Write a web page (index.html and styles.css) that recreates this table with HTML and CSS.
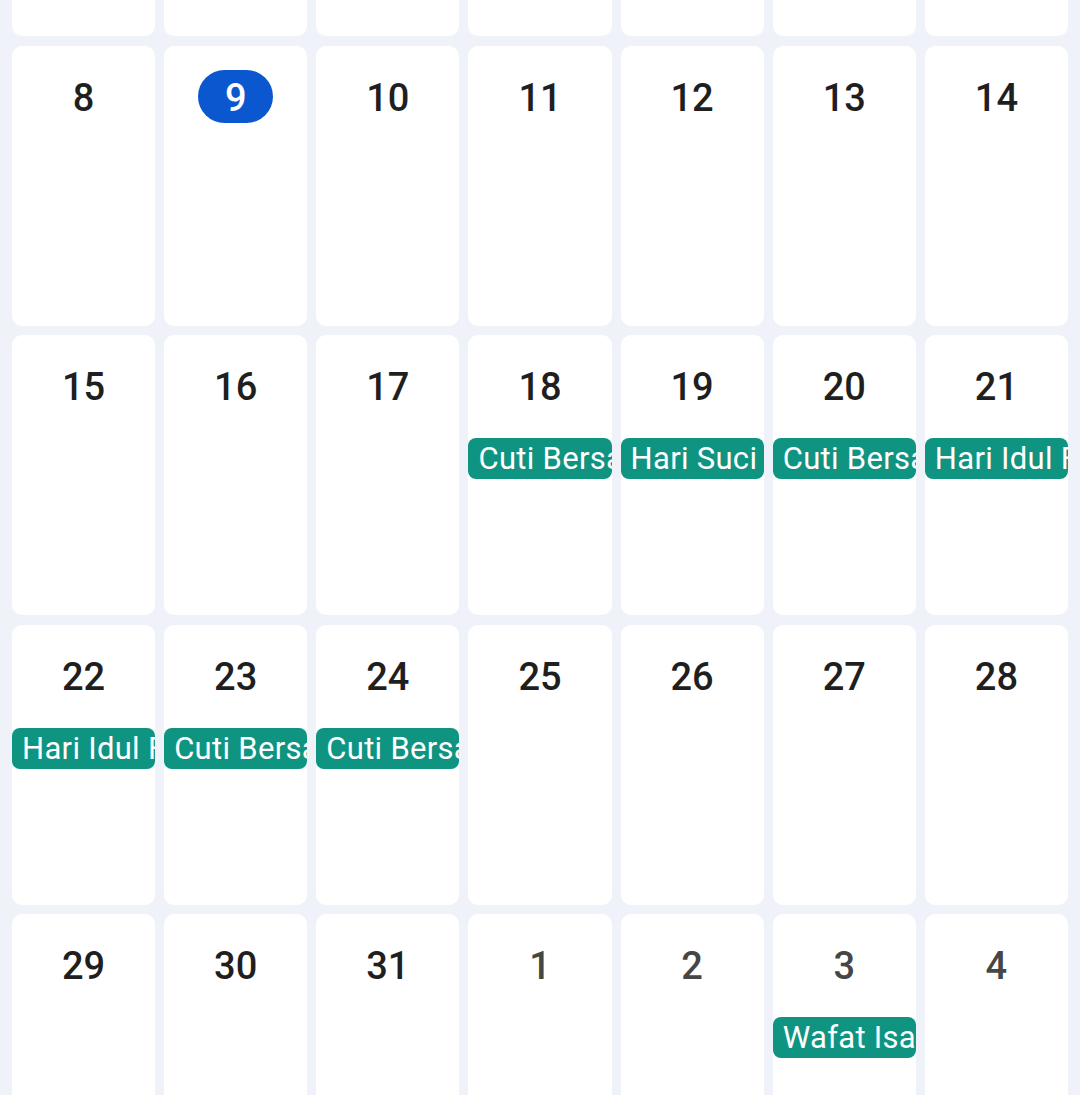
FILE: index.html
```html
<!DOCTYPE html>
<html lang="id">
<head>
<meta charset="utf-8">
<link rel="stylesheet" href="styles.css">
</head>
<body>
<div class="month">
  <div class="cell"><div class="num">1</div></div>
  <div class="cell"><div class="num">2</div></div>
  <div class="cell"><div class="num">3</div></div>
  <div class="cell"><div class="num">4</div></div>
  <div class="cell"><div class="num">5</div></div>
  <div class="cell"><div class="num">6</div></div>
  <div class="cell"><div class="num">7</div></div>

  <div class="cell"><div class="num">8</div></div>
  <div class="cell"><div class="num today">9</div></div>
  <div class="cell"><div class="num">10</div></div>
  <div class="cell"><div class="num">11</div></div>
  <div class="cell"><div class="num">12</div></div>
  <div class="cell"><div class="num">13</div></div>
  <div class="cell"><div class="num">14</div></div>

  <div class="cell"><div class="num">15</div></div>
  <div class="cell"><div class="num">16</div></div>
  <div class="cell"><div class="num">17</div></div>
  <div class="cell"><div class="num">18</div><div class="event">Cuti Bersama</div></div>
  <div class="cell"><div class="num">19</div><div class="event">Hari Suci Nyepi</div></div>
  <div class="cell"><div class="num">20</div><div class="event">Cuti Bersama</div></div>
  <div class="cell"><div class="num">21</div><div class="event">Hari Idul Fitri</div></div>

  <div class="cell"><div class="num">22</div><div class="event">Hari Idul Fitri</div></div>
  <div class="cell"><div class="num">23</div><div class="event">Cuti Bersama</div></div>
  <div class="cell"><div class="num">24</div><div class="event">Cuti Bersama</div></div>
  <div class="cell"><div class="num">25</div></div>
  <div class="cell"><div class="num">26</div></div>
  <div class="cell"><div class="num">27</div></div>
  <div class="cell"><div class="num">28</div></div>

  <div class="cell"><div class="num">29</div></div>
  <div class="cell"><div class="num">30</div></div>
  <div class="cell"><div class="num">31</div></div>
  <div class="cell other"><div class="num">1</div></div>
  <div class="cell other"><div class="num">2</div></div>
  <div class="cell other"><div class="num">3</div><div class="event">Wafat Isa Almasih</div></div>
  <div class="cell other"><div class="num">4</div></div>
</div>
</body>
</html>
```
FILE: styles.css
```css
html, body {
  margin: 0;
  padding: 0;
  background: #eff2f8;
  overflow: hidden;
  height: 1095px;
}

.month {
  display: grid;
  grid-template-columns: repeat(7, 1fr);
  grid-auto-rows: 280px;
  column-gap: 9px;
  row-gap: 9.5px;
  padding: 0 12px;
  margin-top: -244px;
  font-family: Roboto, "Noto Sans", sans-serif;
}

.cell {
  background: #ffffff;
  border-radius: 10px;
  display: flex;
  flex-direction: column;
  align-items: center;
  padding-top: 24px;
  overflow: hidden;
  min-width: 0;
}

.num {
  height: 53px;
  line-height: 57px;
  min-width: 75px;
  text-align: center;
  font-size: 38px;
  font-weight: 500;
  color: #1f1f1f;
  border-radius: 27px;
  overflow: hidden;
}

.num.today {
  background: #0b57d0;
  color: #ffffff;
}

.other .num {
  color: #444746;
}

.event {
  align-self: stretch;
  margin-top: 26px;
  height: 41px;
  line-height: 42px;
  background: #0f9482;
  color: #ffffff;
  border-radius: 8px;
  padding-left: 10px;
  font-size: 31px;
  letter-spacing: 0.3px;
  white-space: nowrap;
  overflow: hidden;
}
```
